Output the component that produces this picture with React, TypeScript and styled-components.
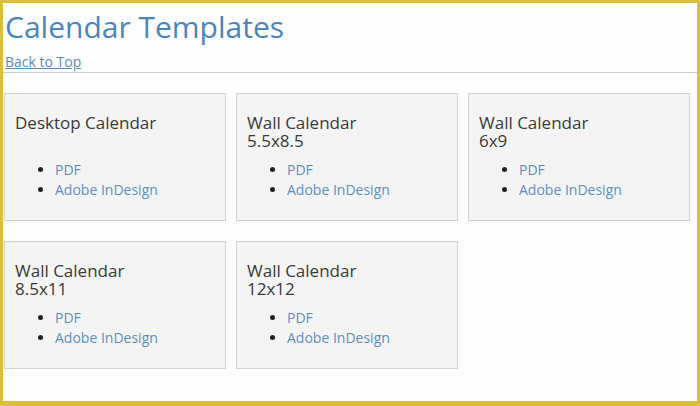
import styled, { createGlobalStyle } from "styled-components";

const GlobalStyle = createGlobalStyle`
  html, body {
    margin: 0;
    padding: 0;
    background: #ffffff;
  }
  body {
    font-family: "Open Sans", "Liberation Sans", sans-serif;
  }
`

const Frame = styled.div`
  box-sizing: border-box;
  width: 700px;
  height: 406px;
  border: 3px solid #d9bf3b;
  border-bottom-width: 5px;
  background: #fdfdfd;
  overflow: hidden;
`

const Header = styled.header`
  padding: 0 2px;
  border-bottom: 1px solid #cfcfcf;
`

const Title = styled.h1`
  margin: 0;
  padding-top: 4px;
  font-size: 30px;
  line-height: 40px;
  font-weight: 400;
  color: #4a86bb;
`

const TopLink = styled.a`
  display: inline-block;
  margin-top: 6px;
  margin-bottom: 1px;
  font-size: 14px;
  line-height: 18px;
  color: #5d8bb3;
  text-decoration: underline;
`

const Grid = styled.div`
  display: grid;
  grid-template-columns: repeat(3, 222px);
  column-gap: 10px;
  row-gap: 20px;
  padding: 20px 1px 0;
`

const Card = styled.section`
  box-sizing: border-box;
  height: 128px;
  padding: 20px 10px 0;
  background: #f4f4f4;
  border: 1px solid #d2d2d2;
`

const CardTitle = styled.h3`
  margin: 0 0 10px;
  height: 36px;
  font-size: 17px;
  line-height: 18px;
  font-weight: 400;
  color: #3a3a3a;
`

const Links = styled.ul`
  margin: 0;
  padding-left: 40px;
  font-size: 14px;
  line-height: 20px;
  color: #222;
`

const Link = styled.a`
  color: #5b8fc2;
  text-decoration: none;
`

const templates = [
  ["Desktop Calendar"],
  ["Wall Calendar", "5.5x8.5"],
  ["Wall Calendar", "6x9"],
  ["Wall Calendar", "8.5x11"],
  ["Wall Calendar", "12x12"],
]

export default function App() {
  return (
    <>
      <GlobalStyle />
      <Frame>
        <Header>
          <Title>Calendar Templates</Title>
          <TopLink href="#top">Back to Top</TopLink>
        </Header>
        <Grid>
          {templates.map((lines, i) => (
            <Card key={i}>
              <CardTitle>
                {lines[0]}
                {lines[1] && (
                  <>
                    <br />
                    {lines[1]}
                  </>
                )}
              </CardTitle>
              <Links>
                <li><Link href="#pdf">PDF</Link></li>
                <li><Link href="#indd">Adobe InDesign</Link></li>
              </Links>
            </Card>
          ))}
        </Grid>
      </Frame>
    </>
  )
}
